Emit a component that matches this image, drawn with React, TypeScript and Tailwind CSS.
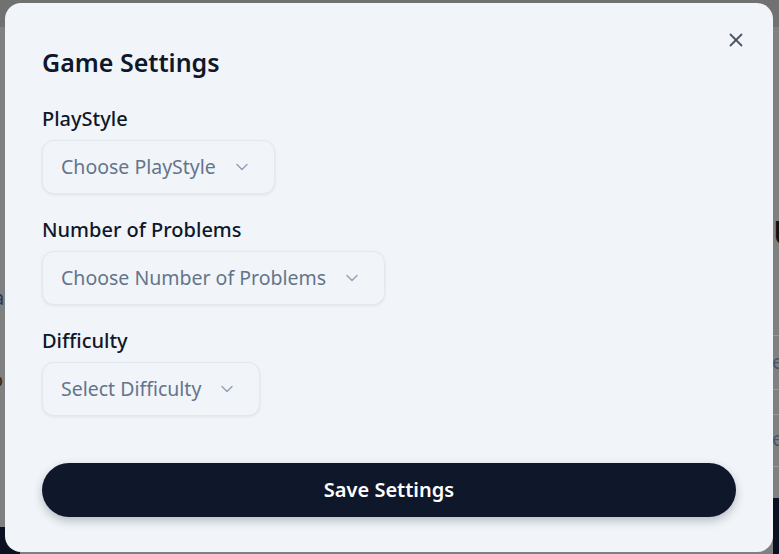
import React from "react";

function Chevron() {
  return (
    <svg width="20" height="20" viewBox="0 0 24 24" fill="none" stroke="currentColor" strokeWidth="1.8" strokeLinecap="round" strokeLinejoin="round" className="text-[#94a3b8]">
      <path d="m6 9 6 6 6-6" />
    </svg>
  );
}

function SelectBox({ placeholder }: { placeholder: string }) {
  return (
    <div className="self-start flex items-center h-[54px] pl-[18px] pr-[22px] gap-[16px] rounded-[12px] border border-[#e2e8f0] bg-[#f1f5f9] shadow-[0_1px_3px_rgba(15,23,42,0.08)]">
      <span className="text-[19.5px] text-[#64748b] leading-none">{placeholder}</span>
      <Chevron />
    </div>
  );
}

function Field({ label, placeholder }: { label: string; placeholder: string }) {
  return (
    <div className="flex flex-col gap-[7px]">
      <div className="text-[20px] font-medium text-[#0f172a] leading-[28px]">{label}</div>
      <SelectBox placeholder={placeholder} />
    </div>
  );
}

export default function App() {
  return (
    <div
      className="relative w-[779px] h-[554px] overflow-hidden bg-[#808080] pl-[5px] pr-[6px] pt-[3px] pb-[2px] flex"
      style={{ fontFamily: '"Noto Sans", "Open Sans", sans-serif' }}
    >
      {/* dimmed page behind the dialog */}
      <div className="absolute left-0 top-0 w-full h-[27px] bg-[#717171]" />
      <div className="absolute left-[773px] top-[215px] text-[34px] font-bold text-[#111] leading-none">U</div>
      <div className="absolute left-[773px] top-[335px] w-[6px] h-px bg-[#999]" />
      <div className="absolute left-[773px] top-[389px] w-[6px] h-px bg-[#999]" />
      <div className="absolute left-[773px] top-[414px] w-[6px] h-px bg-[#999]" />
      <div className="absolute left-[773px] top-[466px] w-[6px] h-px bg-[#999]" />
      <div className="absolute left-[772px] top-[352px] text-[20px] text-[#4a5568] leading-none">e</div>
      <div className="absolute left-[772px] top-[429px] text-[20px] text-[#4a5568] leading-none">e</div>
      <div className="absolute left-[773px] top-[498px] w-[10px] h-[60px] bg-[#0b1120]" />
      <div className="absolute left-[-7px] top-[288px] text-[20px] text-[#1e3a5f] leading-none">a</div>
      <div className="absolute left-[-9px] top-[370px] text-[20px] text-[#3a2a10] leading-none">o</div>
      <div className="absolute left-[-20px] top-[527px] w-[40px] h-[60px] rounded-[14px] bg-[#0b1120]" />

      {/* dialog */}
      <div className="relative flex-1 rounded-[16px] bg-[#f1f5f9] px-[37px] pt-[41px] flex flex-col">
        <button className="absolute right-[26px] top-[26px] text-[#4b5563]">
          <svg width="22" height="22" viewBox="0 0 24 24" fill="none" stroke="currentColor" strokeWidth="2" strokeLinecap="round" strokeLinejoin="round">
            <path d="M18 6 6 18" />
            <path d="m6 6 12 12" />
          </svg>
        </button>
        <h2 className="text-[25px] font-semibold text-[#0f172a] leading-[36px]">Game Settings</h2>
        <div className="mt-[25px] flex flex-col gap-[22px]">
          <Field label="PlayStyle" placeholder="Choose PlayStyle" />
          <Field label="Number of Problems" placeholder="Choose Number of Problems" />
          <Field label="Difficulty" placeholder="Select Difficulty" />
        </div>
        <button className="mt-[47px] h-[54px] w-full rounded-full bg-[#0f172a] text-white text-[20px] font-semibold shadow-[0_4px_10px_rgba(15,23,42,0.25)]">
          Save Settings
        </button>
      </div>
    </div>
  );
}
